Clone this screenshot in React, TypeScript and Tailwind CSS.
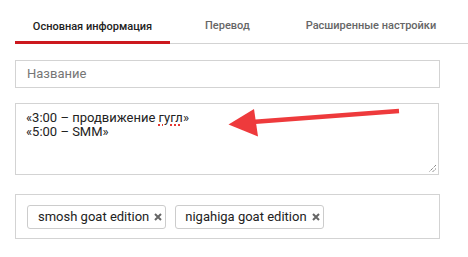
import React from "react";

function X() {
  return (
    <svg width="8" height="8" viewBox="0 0 8 8" className="ml-[5px]">
      <path d="M1 1 L7 7 M7 1 L1 7" stroke="#666" strokeWidth="2" strokeLinecap="butt" />
    </svg>
  );
}

export default function App() {
  return (
    <div
      className="relative w-[468px] h-[257px] bg-white overflow-hidden"
      style={{ fontFamily: "Roboto, 'Noto Sans', sans-serif" }}
    >
      <div className="pl-[15px] pt-[17px]">
        {/* Tabs */}
        <div className="flex items-end border-b border-[#d3d3d3] h-[27px] text-[11px] leading-[16px] font-medium whitespace-nowrap">
          <div className="w-[155px] shrink-0 h-full flex items-start justify-center pt-[1px] border-b-[3px] border-[#cc181e] -mb-[1px] text-[#222]">
            Основная информация
          </div>
          <div className="ml-[35px] shrink-0 h-full flex items-start pt-[1px] text-[#666]">Перевод</div>
          <div className="ml-[56px] shrink-0 h-full flex items-start pt-[1px] text-[#666]">Расширенные настройки</div>
        </div>

        {/* Name input */}
        <div className="mt-[16px] w-[425px] h-[28px] border border-[#d3d3d3] flex items-center pl-[11px] text-[13px] text-[#767676]">
          Название
        </div>

        {/* Textarea */}
        <div className="relative mt-[15px] w-[424px] h-[72px] border border-[#d3d3d3] pl-[10px] pt-[7px] text-[13px] leading-[14px] text-[#222]">
          <div>
            «3:00 – продвижение{" "}
            <span className="underline decoration-dotted decoration-[#e53935] decoration-2 underline-offset-2">гугл</span>»
          </div>
          <div>«5:00 – SMM»</div>
          <svg className="absolute right-[1px] bottom-[1px]" width="9" height="9" viewBox="0 0 9 9">
            <path d="M8 1 L1 8 M8 4.5 L4.5 8" stroke="#555" strokeWidth="1" strokeDasharray="1 1" fill="none" />
          </svg>
        </div>

        {/* Tags */}
        <div className="mt-[19px] w-[425px] h-[45px] border border-[#d3d3d3] flex items-center gap-[9px] pl-[11px]">
          <div className="h-[24px] flex items-center border border-[#ccc] rounded-[3px] pl-[10px] pr-[3px] text-[13px] text-[#222]">
            smosh goat edition
            <X />
          </div>
          <div className="h-[24px] flex items-center border border-[#ccc] rounded-[3px] pl-[9px] pr-[3px] text-[13px] text-[#222]">
            nigahiga goat edition
            <X />
          </div>
        </div>
      </div>

      {/* Arrow annotation */}
      <svg className="absolute left-0 top-0" width="468" height="257" viewBox="0 0 468 257">
        <line x1="399" y1="111" x2="252" y2="122" stroke="#ee3a3c" strokeWidth="4.5" />
        <polygon points="228.5,124.5 254,109 258,136.5" fill="#ee3a3c" />
      </svg>
    </div>
  );
}
